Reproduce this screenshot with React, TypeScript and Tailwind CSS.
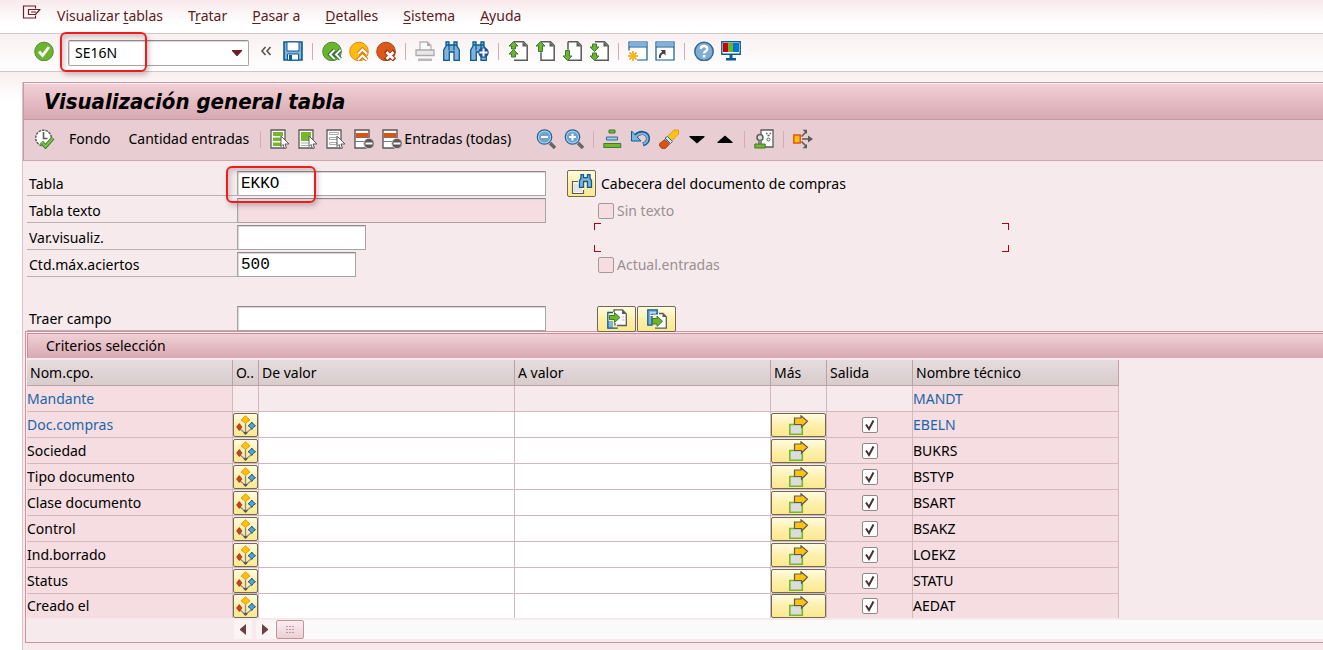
import React from 'react';

type IconProps = { children: React.ReactNode; className?: string };

const Icon: React.FC<IconProps> = ({ children, className = 'w-5 h-5' }) => (
  <svg viewBox="0 0 20 20" className={`${className} block shrink-0`} fill="none" aria-hidden="true">
    {children}
  </svg>
);

type ToolProps = { label: string; children: React.ReactNode };

const Tool: React.FC<ToolProps> = ({ label, children }) => (
  <button type="button" aria-label={label} className="block shrink-0 hover:opacity-80">
    <Icon>{children}</Icon>
  </button>
);

const Separator: React.FC<{ className?: string }> = ({ className = 'mx-[2px]' }) => (
  <span className={`h-[17px] w-px shrink-0 self-center bg-[#dba9b3] ${className}`} />
);

/* Shared glyph parts */

const Binoculars: React.FC = () => (
  <g stroke="#0a5c94" strokeWidth="1.3" fill="#84b1d9">
    <path d="M4 1h3v3h5V1h3v4l2.300 4v10.300H12V11H7.300v8.300H1.700V9L4 5z" />
    <path d="M7 4.500v5M12 4.500v5" />
    <path d="M4 4h3M12 4h3" />
  </g>
);

const Page: React.FC<{ edge?: string }> = ({ edge = '' }) => (
  <>
    <path d="M6 1h9.500L19 4.500V19H6z" fill="#fff" />
    <path d={`M6 .8h9.500L19.200 4.500v14.700H6${edge}`} stroke="#5a5a5a" strokeWidth="1.500" />
    <path d="M14.500 1v4.500H19z" fill="#5a5a5a" />
  </>
);

const GreenArrow: React.FC<{ d: string }> = ({ d }) => (
  <path d={d} fill="#6cb52a" stroke="#3c7a35" strokeWidth="1" />
);

const Cursor: React.FC = () => (
  <path d="M11 7l8 8h-4l1.500 4-2 .500-1.500-4-2 2z" fill="#fff" stroke="#5a5a5a" strokeWidth="1" />
);

const DeleteRow: React.FC = () => (
  <>
    <path d="M1 1h14v18H1z" fill="#fff" stroke="#5a5a5a" strokeWidth="1.400" />
    <path d="M1.500 4h13v4h-13z" fill="#dd5312" />
    <path d="M1 12.500h12M1 8.500h14" stroke="#777" />
    <circle cx="15" cy="14.500" r="5.200" fill="#5a5a5a" stroke="#e8cdd3" />
    <path d="M11.500 13.500h7v2h-7z" fill="#fff" />
  </>
);

const Lens: React.FC<{ plus?: boolean }> = ({ plus }) => (
  <>
    <path d="M14 14l5 5" stroke="#666" strokeWidth="3.500" />
    <circle cx="8.500" cy="8" r="7.200" fill="#bcd7ec" stroke="#1f6599" strokeWidth="1.300" />
    <circle cx="8.500" cy="8" r="5.600" fill="#6ea2cf" />
    <path d="M5 8h7" stroke="#fff" strokeWidth="2" />
    {plus && <path d="M8.500 4.500v7" stroke="#fff" strokeWidth="2" />}
  </>
);

const Diamonds: React.FC = () => (
  <Icon>
    <path d="M9.500 9v9M4 14l5.500 4.500L15 14" stroke="#8b8b8b" strokeWidth="1.300" />
    <path d="M7.500 17h4v1l-2 2-2-2z" fill="#555" />
    <path d="M9.500 .7l1.800 2 2.200 1.800v1l-2.200 1.300-1.800 2-1.800-2-2.200-1.300v-1l2.200-1.800z" fill="#ffc20e" stroke="#ee8c00" />
    <path d="M3.300 8.500l2.700 3.500-2.700 3.500L.6 12z" fill="#cf3f1c" stroke="#9c2b12" strokeWidth=".7" />
    <path d="M15.800 7l1.300 2 2.400 1.700L17.100 12.500l-1.300 2-1.300-2-2.400-1.800L14.500 9z" fill="#5f9ed0" stroke="#0a5c94" />
  </Icon>
);

const MoreArrow: React.FC = () => (
  <Icon>
    <path d="M.8 9.500h12.500v9.700H.8z" fill="#dcdcdc" stroke="#76b72a" strokeWidth="1.600" />
    <path d="M5.500 3h6.500V.8L18.500 6.300 12.500 12V9.500h-7z" fill="#ffc20e" stroke="#5a5a5a" strokeWidth="1.200" />
  </Icon>
);

/* Red marker drawn over a field */
const Highlight: React.FC<{ className: string }> = ({ className }) => (
  <span
    className={`pointer-events-none absolute rounded-md border-2 border-[#ee1c1c] shadow-[2px_3px_5px_rgba(90,60,70,0.3),inset_2px_3px_5px_rgba(90,60,70,0.25)] ${className}`}
  />
);

const menus: [string, string, string][] = [
  ['Visualizar ', 't', 'ablas'],
  ['T', 'r', 'atar'],
  ['', 'P', 'asar a'],
  ['', 'D', 'etalles'],
  ['', 'S', 'istema'],
  ['', 'A', 'yuda'],
];

const MenuBar: React.FC = () => (
  <nav className="flex h-[34px] items-center gap-[25px] border-b border-[#cfc8ca] bg-linear-to-b from-[#f8e9ec] to-white to-70% pb-px pl-[22px] text-[#5c1a22]">
    <button type="button" aria-label="Menú" className="-mr-[10px] mb-2">
      <svg viewBox="0 0 20 14" className="h-[14px] w-5" fill="none" stroke="#6b1f28" strokeWidth="1.200">
        <path d="M13.500 3.500V1H1.500v12h12v-2.500M6.500 4.500h12M6.500 4v5.500h7l4.500-5M9 7h5" />
      </svg>
    </button>
    {menus.map(([before, key, after]) => (
      <button key={before + key + after} type="button" className="whitespace-pre">
        {before}
        <u className="underline-offset-2">{key}</u>
        {after}
      </button>
    ))}
  </nav>
);

const StandardToolbar: React.FC = () => (
  <div className="flex h-[38px] items-start gap-[7px] border-b border-[#cfc8ca] bg-linear-to-b from-[#f9f0f1] to-white pt-[7px] pl-[34px]">
    <Tool label="Continuar">
      <circle cx="10" cy="10.500" r="9.300" fill="#6cb52a" stroke="#4a8b3a" />
      <path d="M5 10.500l3.500 4L15 6" stroke="#fff" strokeWidth="2.800" />
    </Tool>
    <div className="relative -mt-px ml-[7px]">
      <input
        aria-label="Comando"
        defaultValue="SE16N"
        className="block h-[26px] w-[181px] rounded-[2px] border border-[#a9a3a5] border-t-[#8f898b] bg-white pb-[2px] pl-[6px] shadow-[inset_1px_1px_1px_#d8d4d5]"
      />
      <button type="button" aria-label="Historial" className="absolute top-[10px] right-[7px]">
        <svg viewBox="0 0 10 6" className="h-[6px] w-[10px]">
          <path d="M0 0h10v1L5.500 6h-1L0 1z" fill="#6b1f28" />
        </svg>
      </button>
      <Highlight className="-top-2 -left-2 h-10 w-[87px]" />
    </div>
    <button type="button" aria-label="Ocultar campo" className="mx-1 mt-[5px]">
      <svg viewBox="0 0 12 10" className="h-[10px] w-3" fill="none" stroke="#555" strokeWidth="1.600">
        <path d="M5.500 1L2 5l3.500 4M10.500 1L7 5l3.500 4" />
      </svg>
    </button>
    <div className="flex items-center gap-[7px]">
      <Tool label="Grabar">
        <path d="M1 1h18v18H1z" fill="#84b1d9" stroke="#0a5c94" strokeWidth="1.600" />
        <path d="M4 1h12v9H4z" fill="#fff" stroke="#0a5c94" />
        <path d="M4.500 13h11v6h-11z" fill="#fff" stroke="#0a5c94" />
        <path d="M6 14h3v5H6z" fill="#0a5c94" />
      </Tool>
      <Separator />
      <Tool label="Atrás">
        <circle cx="10" cy="10.500" r="9.300" fill="#6cb52a" stroke="#3f8a3c" />
        <path d="M12.500 9L8 13.500l4.500 4.500M18.500 9L14 13.500l4.500 4.500" stroke="#2f6d35" strokeWidth="4" />
        <path d="M12.500 9L8 13.500l4.500 4.500M18.500 9L14 13.500l4.500 4.500" stroke="#fff" strokeWidth="2" />
      </Tool>
      <Tool label="Finalizar">
        <circle cx="10" cy="10.500" r="9.300" fill="#fdbb12" stroke="#dd8a10" />
        <path d="M9 13l4.500-4.500L18 13M9 19l4.500-4.500L18 19" stroke="#d9760c" strokeWidth="4" />
        <path d="M9 13l4.500-4.500L18 13M9 19l4.500-4.500L18 19" stroke="#fff" strokeWidth="2" />
      </Tool>
      <Tool label="Cancelar">
        <circle cx="10" cy="10.500" r="9.300" fill="#d9581b" stroke="#b1440f" />
        <path d="M9.500 10l9 9M18.500 10l-9 9" stroke="#9c3410" strokeWidth="4.500" />
        <path d="M10.500 11l7 7M17.500 11l-7 7" stroke="#fff" strokeWidth="2.800" />
      </Tool>
      <Separator />
      <Tool label="Imprimir">
        <path d="M5 9V1h7.500L16 4.500V9" fill="#fafafa" stroke="#b5b5b5" strokeWidth="1.300" />
        <path d="M12 1v4h4z" fill="#a9a9a9" />
        <path d="M1 9h18v5.500H1z" fill="#e8e8e8" stroke="#aaa" strokeWidth="1.300" />
        <path d="M3 17.500h14V20H3z" fill="#b9b9b9" />
      </Tool>
      <Tool label="Buscar">
        <Binoculars />
      </Tool>
      <Tool label="Continuar búsqueda">
        <Binoculars />
        <circle cx="14.500" cy="11.500" r="5.200" fill="#1f4f9c" />
        <path d="M14.500 7.500v8M10.500 11.500h8" stroke="#fff" strokeWidth="2" />
      </Tool>
      <Separator />
      <Tool label="Primera página">
        <Page />
        <GreenArrow d="M5.500 .500l4.500 4.500H7.500v3h-4V5H1z" />
        <GreenArrow d="M5.500 8.500l4.500 4.500H7.500v3h-4v-3H1z" />
      </Tool>
      <Tool label="Página anterior">
        <Page edge="v-8" />
        <GreenArrow d="M5.500 .500l4.500 4.500H7.500v5.500h-4V5H1z" />
      </Tool>
      <Tool label="Página siguiente">
        <Page edge="M6 .8v8" />
        <GreenArrow d="M5.500 19.500L1 15h2.500V9.500h4V15H10z" />
      </Tool>
      <Tool label="Última página">
        <Page />
        <GreenArrow d="M5.500 10.500L1 6h2.500V3h4v3H10z" />
        <GreenArrow d="M5.500 19.500L1 15h2.500v-3h4v3H10z" />
      </Tool>
      <Separator />
      <Tool label="Crear modo">
        <path d="M1 1h18v18H1z" fill="#fff" stroke="#0a5c94" strokeWidth="1.200" />
        <path d="M1.500 1.500h17v4h-17z" fill="#84b1d9" />
        <path d="M1 6h18" stroke="#0a5c94" />
        <path d="M0 9.500h9V20H0z" fill="#fff" />
        <path d="M5 10v10M0 15h10M1.500 11.500l7 7M8.500 11.500l-7 7" stroke="#f39a0b" strokeWidth="1.500" />
        <circle cx="5" cy="15" r="2.800" fill="#ffb90f" />
      </Tool>
      <Tool label="Crear acceso directo">
        <path d="M1 1h18v18H1z" fill="#fff" stroke="#0a5c94" strokeWidth="1.200" />
        <path d="M1.500 1.500h17v4h-17z" fill="#84b1d9" />
        <path d="M1 6h18" stroke="#0a5c94" />
        <path d="M5 17c-.5-3.500 1-5 4-5.500" stroke="#444" strokeWidth="2" />
        <path d="M5.500 9h5v5.500z" fill="#444" />
      </Tool>
      <Separator />
      <Tool label="Ayuda">
        <circle cx="10" cy="10.500" r="9.200" fill="#7fadd5" stroke="#2d6a98" strokeWidth="1.500" />
        <path d="M6.700 8c0-4 6.600-4 6.600 0 0 2.300-3.300 2.300-3.300 4.500" stroke="#fff" strokeWidth="2.300" />
        <path d="M8.800 14h2.500v2.500H8.800z" fill="#fff" />
      </Tool>
      <Tool label="Ajustar formato local">
        <path d="M.8 .8h18.400v12.400H.8z" fill="#fff" stroke="#0a5c94" strokeWidth="1.400" />
        <path d="M2 2h5v9H2z" fill="#c90000" />
        <path d="M7 2h5v9H7z" fill="#6cb52a" />
        <path d="M12 2h6v9h-6z" fill="#0077d4" />
        <path d="M8.500 14h3v3H15v2.500H5V17h3.500z" fill="#0a5c94" />
      </Tool>
    </div>
  </div>
);

const AppToolbar: React.FC = () => (
  <div className="flex h-[41px] items-center gap-2 border-b border-[#cfa5af] bg-[#e8cdd3] pb-[2px] pl-[11px]">
    <Tool label="Ejecutar">
      <circle cx="8.500" cy="9" r="7.800" fill="#fff" stroke="#5a5a5a" strokeWidth="1.500" strokeDasharray="2.500 1" />
      <path d="M8.500 3v6.500h4" stroke="#5a5a5a" strokeWidth="1.600" />
      <path d="M6.500 13l4 4.500L18 9" stroke="#3c7a35" strokeWidth="4" />
      <path d="M6.500 13l4 4.500L18 9" stroke="#7cc242" strokeWidth="2" />
    </Tool>
    <button type="button" className="ml-[6px]">Fondo</button>
    <button type="button" className="mr-[2px] ml-[10px]">Cantidad entradas</button>
    <Separator className="mx-px" />
    <Tool label="Marcar todo">
      <path d="M1 1h14v18H1z" fill="#fff" stroke="#5a5a5a" strokeWidth="1.300" />
      <path d="M3 3h10v4H3zM3 8.500h9v3.500H3zM3 13.500h9V17H3z" fill="#76b72a" />
      <Cursor />
    </Tool>
    <Tool label="Marcar bloque">
      <path d="M1 1h14v18H1z" fill="#fff" stroke="#5a5a5a" strokeWidth="1.300" />
      <path d="M3 3h10v9H3z" fill="#76b72a" />
      <path d="M3 14h7M3 16.500h7" stroke="#aaa" />
      <Cursor />
    </Tool>
    <Tool label="Desmarcar todo">
      <path d="M1 1h14v18H1z" fill="#fff" stroke="#5a5a5a" strokeWidth="1.300" />
      <path d="M3.500 3.500h9v2h-9zM3.500 8.500h7v2h-7zM3.500 13.500h7v2h-7z" stroke="#aaa" />
      <Cursor />
    </Tool>
    <Tool label="Borrar entrada">
      <DeleteRow />
    </Tool>
    <button type="button" className="flex items-center gap-[2px]">
      <Icon>
        <DeleteRow />
      </Icon>
      Entradas (todas)
    </button>
    <span className="w-[9px]" />
    <Tool label="Reducir">
      <Lens />
    </Tool>
    <Tool label="Ampliar">
      <Lens plus />
    </Tool>
    <Separator className="mx-px" />
    <Tool label="Ordenar">
      <path d="M6 1h6v3H6z" fill="#76b72a" stroke="#3c7a35" />
      <path d="M3.500 8h11v3h-11z" fill="#a8c9e6" stroke="#2d6a98" />
      <path d="M.8 14.500h17v4H.8z" fill="#76b72a" stroke="#3c7a35" />
    </Tool>
    <Tool label="Deshacer">
      <path d="M4.500 7C10 1.500 17 4 17 9.500c0 3-2 5-5 6" stroke="#0a5c94" strokeWidth="4" />
      <path d="M.5 2v10h9.500z" fill="#84b1d9" stroke="#0a5c94" />
      <path d="M4.500 7.500C10 2.500 16.500 4.500 16.500 9.500c0 2.500-1.500 4.500-4 5.500" stroke="#84b1d9" strokeWidth="2" />
    </Tool>
    <Tool label="Borrar contenido">
      <path d="M8.500 7.500L15 1h4.500v4L12.500 12z" fill="#ffc20e" stroke="#e39a10" />
      <path d="M6 9l5.500 5.500 2-2-5-5z" fill="#cfe2f2" stroke="#2d6a98" />
      <path d="M6 10.500L.7 14.500V17l2 2.300h3.800l4-4.300z" fill="#dd5312" stroke="#a83a10" />
    </Tool>
    <Tool label="Siguiente">
      <path d="M2.500 7h15v1L10 14.500 2.500 8z" fill="#000" />
    </Tool>
    <Tool label="Anterior">
      <path d="M2.500 14h15v-1L10 6.500 2.500 13z" fill="#000" />
    </Tool>
    <Separator className="mx-px" />
    <Tool label="Autorización">
      <path d="M7 1h12v17H7z" fill="#fff" stroke="#5a5a5a" strokeWidth="1.300" />
      <path d="M12 4.500h1.500M15.500 4.500h1.500M13.500 6.500h2" stroke="#5a5a5a" strokeWidth="1.300" />
      <circle cx="14.500" cy="10.500" r="1.500" stroke="#5a5a5a" />
      <circle cx="6" cy="8.500" r="3" fill="#ddd" stroke="#5a5a5a" strokeWidth="1.500" />
      <path d="M4 11.500h4v3.500H4z" fill="#8b8b8b" />
      <path d="M.8 15h10.400v4H.8z" fill="#76b72a" stroke="#3c7a35" />
    </Tool>
    <Separator className="mx-px" />
    <Tool label="Distribuir">
      <path d="M9 10h7M8.500 7.500L13 3M8.500 12.500L13 17" stroke="#5a5a5a" strokeWidth="1.500" />
      <path d="M15 6.500l5 3.500-5 3.500zM9.500 .700H14V5zM9.500 19.300H14V15z" fill="#5a5a5a" />
      <path d="M.8 6h6.400v8H.8z" fill="#ffc20e" stroke="#e0580c" strokeWidth="1.500" />
    </Tool>
  </div>
);

type FieldProps = { id: string; label: string; width: string; value?: string; disabled?: boolean; marked?: boolean };

const Field: React.FC<FieldProps> = ({ id, label, width, value, disabled, marked }) => (
  <div className="flex h-[25px]">
    <label htmlFor={id} className="w-[210px] border-b border-[#b9b0b2] pl-[2px] leading-[25px]">
      {label}
    </label>
    <div className="relative">
      <input
        id={id}
        defaultValue={value}
        disabled={disabled}
        className={`block h-[25px] border border-[#a9a3a5] border-t-[#8f898b] bg-white pl-[3px] font-['Liberation_Mono',monospace] text-base shadow-[inset_1px_1px_1px_#d8d4d5] disabled:bg-[#f5dde2] ${width}`}
      />
      {marked && <Highlight className="-top-[5px] -left-[11px] z-10 h-[37px] w-[90px]" />}
    </div>
  </div>
);

const YellowButton: React.FC<ToolProps & { className: string }> = ({ label, children, className }) => (
  <button
    type="button"
    aria-label={label}
    className={`flex items-center justify-center rounded-[2px] border border-[#6f6a55] bg-linear-to-b from-[#fffbe0] via-[#fdf0ab] to-[#fbe890] ${className}`}
  >
    {children}
  </button>
);

const DisabledCheck: React.FC<{ id: string; label: string }> = ({ id, label }) => (
  <div className="flex h-[25px] items-center gap-[3px] pl-[31px] text-[#9a8f91]">
    <input
      id={id}
      type="checkbox"
      disabled
      className="h-4 w-4 appearance-none rounded-[2px] border border-[#a39a9c] bg-[#f5dde2]"
    />
    <label htmlFor={id}>{label}</label>
  </div>
);

const SelectionForm: React.FC = () => (
  <form className="flex gap-[21px] pt-[10px] pl-1">
    <div className="flex flex-col gap-[2px]">
      <Field id="tabla" label="Tabla" width="w-[309px]" value="EKKO" marked />
      <Field id="tabla-texto" label="Tabla texto" width="w-[309px]" disabled />
      <Field id="variante" label="Var.visualiz." width="w-[129px]" />
      <Field id="max" label="Ctd.máx.aciertos" width="w-[119px]" value="500" />
      <div className="h-[25px]" />
      <Field id="campo" label="Traer campo" width="w-[309px]" />
    </div>
    <div className="flex flex-col gap-[2px]">
      <div className="flex h-[25px] items-center gap-[5px]">
        <YellowButton label="Buscar tabla" className="h-[27px] w-[29px]">
          <svg viewBox="0 0 22 20" className="h-5 w-[22px]" fill="none">
            <path d="M1.500 8h11v11.500h-11z" fill="#fafafa" />
            <path d="M3 9.500h8V18H3z" fill="#e4e4e4" />
            <path d="M7 7.500H1.500v12h11V16" stroke="#5a5a5a" strokeWidth="1.200" />
            <path
              d="M10 .7h2.500v3h4v-3H19v3.500l1.500 2.500v6.600h-4V7.500h-4v5.800h-4V6.700L10 4.200z"
              fill="#84b1d9"
              stroke="#0a5c94"
              strokeWidth="1.300"
            />
          </svg>
        </YellowButton>
        <span>Cabecera del documento de compras</span>
      </div>
      <DisabledCheck id="sin-texto" label="Sin texto" />
      <div className="flex h-[25px] items-center pl-[27px]">
        <div className="flex h-[29px] w-[415px] flex-col justify-between">
          <div className="flex justify-between">
            <span className="h-[7px] w-[7px] border-t border-l border-[#b00010]" />
            <span className="h-[7px] w-[7px] border-t border-r border-[#b00010]" />
          </div>
          <div className="flex justify-between">
            <span className="h-[7px] w-[7px] border-b border-l border-[#b00010]" />
            <span className="h-[7px] w-[7px] border-r border-b border-[#b00010]" />
          </div>
        </div>
      </div>
      <DisabledCheck id="actual" label="Actual.entradas" />
      <div className="h-[25px]" />
      <div className="flex h-[25px] gap-px pl-[30px]">
        <YellowButton label="Traer" className="h-[26px] w-[39px]">
          <Icon>
            <path d="M8 .8h7l4 4v11.700H8z" fill="#fff" />
            <path d="M7 3V.8h8.500L19.300 5v11.500H10M8 16.500V14" stroke="#5a5a5a" strokeWidth="1.300" />
            <path d="M15 .8V5h4.300z" fill="#5a5a5a" />
            <path d="M1 12h5v7.500H1z" fill="#84b1d9" />
            <path d="M6 3.500H.8v15.700h10" stroke="#0a5c94" strokeWidth="1.300" />
            <GreenArrow d="M2.500 6.500h5V3.500L13 8.500 7.500 13.500v-3h-5z" />
            <path d="M14.500 8h3M14.500 11h3" stroke="#bbb" />
          </Icon>
        </YellowButton>
        <YellowButton label="Llevar" className="h-[26px] w-[39px]">
          <Icon>
            <path d="M9 4h8l3 3v12.300H9z" fill="#fff" />
            <path d="M12 4.500h4l3.300 3.300v11.400H8" stroke="#5a5a5a" strokeWidth="1.300" />
            <path d="M15.500 4.500V8h4z" fill="#5a5a5a" />
            <path d="M.8 .8h9.400v4H5v11.400H.8z" fill="#84b1d9" stroke="#0a5c94" strokeWidth="1.300" />
            <path d="M3 4h6M3 6.500h3" stroke="#fff" />
            <GreenArrow d="M5.500 9.500H10V7l5.500 5.200L10 17.500V15H5.500z" />
          </Icon>
        </YellowButton>
      </div>
    </div>
  </form>
);

const rows: { name: string; tech: string; key?: boolean; locked?: boolean }[] = [
  { name: 'Mandante', tech: 'MANDT', key: true, locked: true },
  { name: 'Doc.compras', tech: 'EBELN', key: true },
  { name: 'Sociedad', tech: 'BUKRS' },
  { name: 'Tipo documento', tech: 'BSTYP' },
  { name: 'Clase documento', tech: 'BSART' },
  { name: 'Control', tech: 'BSAKZ' },
  { name: 'Ind.borrado', tech: 'LOEKZ' },
  { name: 'Status', tech: 'STATU' },
  { name: 'Creado el', tech: 'AEDAT' },
];

const headers = ['Nom.cpo.', 'O..', 'De valor', 'A valor', 'Más', 'Salida', 'Nombre técnico'];

const CriteriaTable: React.FC = () => (
  <table className="w-[1092px] table-fixed border-separate border-spacing-0">
    <colgroup>
      <col className="w-[206px]" />
      <col className="w-[26px]" />
      <col className="w-[256px]" />
      <col className="w-[256px]" />
      <col className="w-[56px]" />
      <col className="w-[86px]" />
      <col className="w-[206px]" />
    </colgroup>
    <thead>
      <tr className="h-[26px]">
        {headers.map((h) => (
          <th
            key={h}
            scope="col"
            className="border-r border-b border-[#bfa0a7] bg-linear-to-b from-[#e6dcdd] to-[#d8cccd] p-0 pl-[3px] text-left font-normal whitespace-nowrap"
          >
            {h}
          </th>
        ))}
      </tr>
    </thead>
    <tbody>
      {rows.map(({ name, tech, key, locked }) => (
        <tr
          key={tech}
          className="h-[26px] leading-[22px] *:border-r *:border-b *:border-[#d3b8be] *:p-0 last:h-6 last:*:border-b-0"
        >
          <td className={`bg-[#f5dde2] ${key ? 'text-[#1a66a8]' : ''}`}>{name}</td>
          <td>
            {!locked && (
              <YellowButton label={`Opciones ${name}`} className="h-6 w-[25px]">
                <Diamonds />
              </YellowButton>
            )}
          </td>
          <td className={locked ? '' : 'bg-white'}>
            {!locked && <input aria-label={`De valor ${name}`} className="block h-[22px] w-full px-1 outline-none" />}
          </td>
          <td className={locked ? '' : 'bg-white'}>
            {!locked && <input aria-label={`A valor ${name}`} className="block h-[22px] w-full px-1 outline-none" />}
          </td>
          <td>
            {!locked && (
              <YellowButton label={`Más ${name}`} className="h-6 w-[55px]">
                <MoreArrow />
              </YellowButton>
            )}
          </td>
          <td className={locked ? '' : 'bg-[#f5dde2]'}>
            {!locked && (
              <span className="relative mx-auto block h-4 w-4">
                <input
                  type="checkbox"
                  defaultChecked
                  aria-label={`Salida ${name}`}
                  className="peer block h-4 w-4 appearance-none rounded-[2px] border border-[#8f898b] bg-white"
                />
                <svg
                  viewBox="0 0 16 16"
                  className="pointer-events-none absolute inset-0 hidden h-4 w-4 peer-checked:block"
                  fill="none"
                >
                  <path d="M4 7.500l3 4.500 4.500-8.500" stroke="#45332f" strokeWidth="2" />
                </svg>
              </span>
            )}
          </td>
          <td className={`bg-[#f5dde2] ${key ? 'text-[#1a66a8]' : ''}`}>{tech}</td>
        </tr>
      ))}
    </tbody>
  </table>
);

const Scrollbar: React.FC = () => (
  <div className="mt-[2px] ml-[207px] flex h-[19px] bg-[#fbfafa]">
    <button type="button" aria-label="Izquierda" className="flex w-[18px] items-center justify-center bg-[#fbf3f4]">
      <svg viewBox="0 0 6 11" className="h-[11px] w-[6px]">
        <path d="M6 0v11L0 6V5z" fill="#6b3f48" />
      </svg>
    </button>
    <span className="w-1 bg-[#f6eaec]" />
    <button type="button" aria-label="Derecha" className="flex w-[18px] items-center justify-center bg-[#fbf3f4]">
      <svg viewBox="0 0 6 11" className="h-[11px] w-[6px]">
        <path d="M0 0v11l6-5V5z" fill="#6b3f48" />
      </svg>
    </button>
    <div className="ml-[2px] flex w-7 items-center justify-center rounded-[2px] border border-[#c3929d] bg-linear-to-b from-[#f9eef0] to-[#ecd0d6]">
      <svg viewBox="0 0 9 7" className="h-[7px] w-[9px]" fill="none" stroke="#b99aa1" strokeDasharray="2 1">
        <path d="M0 .500h9M0 3.500h9M0 6.500h9" />
      </svg>
    </div>
  </div>
);

export default function App() {
  return (
    <div className="min-h-screen overflow-hidden bg-white font-['Noto_Sans',sans-serif] text-sm text-black">
      <MenuBar />
      <StandardToolbar />
      <div className="bg-linear-to-b from-[#f9eef0] to-white to-5% pt-[10px] pl-[22px]">
        <main className="border-l border-[#e0c3c9] bg-[#f6eaec] pb-[7px]">
          <div className="border-t border-l border-[#c59aa4]">
            <h1 className="flex h-[37px] items-center border-t border-b border-t-[#faeef0] border-b-[#c59aa4] bg-linear-to-b from-[#f0d0d6] to-[#d8a8b2] pl-5 font-['DejaVu_Sans_Condensed','DejaVu_Sans',sans-serif] text-[22px] font-bold italic">
              Visualización general tabla
            </h1>
            <AppToolbar />
          </div>
          <SelectionForm />
          <section className="ml-[2px] border-y border-l border-[#d090a0] pb-[3px]">
            <div className="pt-px pl-px">
              <h2 className="mb-[2px] flex h-[25px] items-center border-t border-l border-[#c98e9b] bg-linear-to-b from-[#f0d0d6] to-[#d9a9b3] pl-[18px]">
                Criterios selección
              </h2>
              <CriteriaTable />
              <Scrollbar />
            </div>
          </section>
        </main>
      </div>
    </div>
  );
}
